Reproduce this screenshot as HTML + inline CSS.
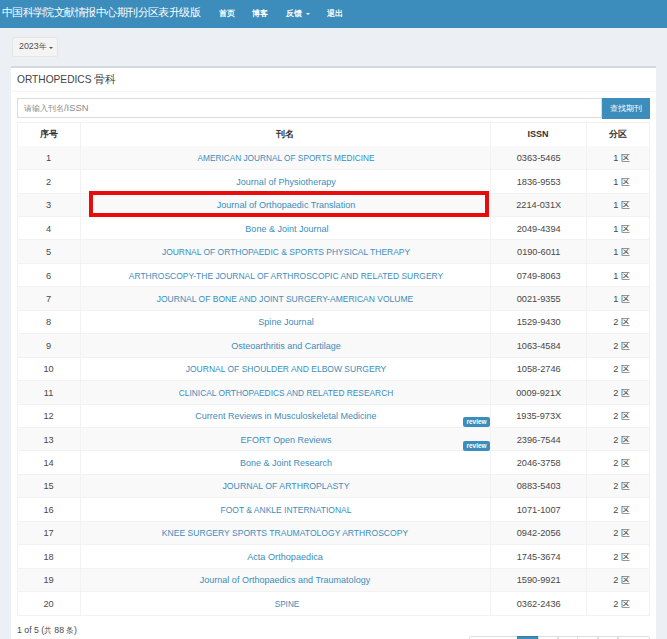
<!DOCTYPE html>
<html><head><meta charset="utf-8"><style>
*{margin:0;padding:0;box-sizing:border-box}
html,body{width:667px;height:639px;overflow:hidden;background:#ecf0f5;font-family:"Liberation Sans",sans-serif;color:#333;position:relative}
#nav{position:absolute;left:0;top:0;width:667px;height:27.6px;background:#3c8dbc}
#brand{position:absolute;left:1.7px;top:5.2px;font-size:11px;line-height:14px;letter-spacing:-0.55px;color:#fff;white-space:nowrap}
.nv{position:absolute;top:8.3px;font-weight:bold;font-size:8px;line-height:11px;color:#fff;white-space:nowrap}
.caret{position:absolute;width:0;height:0;border-left:2px solid transparent;border-right:2px solid transparent;border-top:2px solid #555}
#yearbtn{position:absolute;left:11.5px;top:36.6px;width:46.6px;height:20px;background:#f4f4f4;border:1px solid #e6e6e6;border-radius:2px}
#yeartxt{position:absolute;left:18.7px;top:40.3px;font-size:9.2px;line-height:12px;color:#505050;white-space:nowrap;transform:scaleX(0.965);transform-origin:0 50%}
#yeartxt span{font-size:8px}
#box{position:absolute;left:11.2px;top:66.2px;width:644.8px;height:600px;background:#fff;border-top:2px solid #d4d8df}
#boxtitle{position:absolute;left:16.5px;top:71.5px;font-size:11px;line-height:14px;color:#444;white-space:nowrap}
#boxtitle .lat{display:inline-block;transform:scaleX(0.925);transform-origin:0 50%;}
#boxtitle .cjk{position:absolute;left:77.3px;top:0}
#boxhr{position:absolute;left:11.2px;top:90.6px;width:644.8px;height:1px;background:#f4f4f4}
#search{position:absolute;left:16.7px;top:98.3px;width:585.5px;height:19.4px;border:1px solid #dcdcdc;background:#fff}
#ph{position:absolute;left:24px;top:102.4px;font-size:8px;line-height:11px;color:#8a8a8a;white-space:nowrap}
#ph span{font-size:9.4px}
#sbtn{position:absolute;left:602px;top:98.1px;width:48px;height:20.7px;background:#3c8dbc}
#sbtxt{position:absolute;left:609.8px;top:103px;font-size:8px;line-height:11px;color:#fff;white-space:nowrap}
#thead{position:absolute;left:17.2px;top:122.3px;width:632.8px;height:23.90px;background:#fff}
.th{position:absolute;top:123.40px;height:23.90px;line-height:23.90px;font-size:9px;font-weight:bold;text-align:center;color:#333;white-space:nowrap}
.row{position:absolute;left:17.2px;width:632.8px;height:23.44px}
.hl{position:absolute;left:17.2px;width:632.8px;height:1px;background:#f2f2f2}
.vl{position:absolute;top:122.3px;width:1px;height:492.70px;background:#f2f2f2}
.cell{position:absolute;height:23.44px;line-height:23.44px;font-size:9.2px;text-align:center;white-space:nowrap;color:#444}
.c1{left:17.2px;width:63.1px;color:#484848;font-size:9.8px;transform:scaleX(0.94)}
.nm{width:600px;color:#3c8dbc;font-size:9.6px}
.c3{left:490.5px;width:95.4px;color:#484848;font-size:9.8px;transform:scaleX(0.94)}
.c4{left:589.3px;width:64.4px;color:#484848;margin-top:1px}
.badge{position:absolute;left:463px;width:27px;height:10px;background:#3c8dbc;border-radius:2px;color:#fff;font-size:6.5px;font-weight:bold;line-height:10px;text-align:center}
#redbox{position:absolute;left:89px;top:191px;width:400px;height:26px;border:4px solid #e80b0b}
#foot{position:absolute;left:17.1px;top:623.8px;font-size:9.2px;line-height:12px;color:#4a4a4a;white-space:nowrap;transform:scaleX(0.953);transform-origin:0 50%}
#foot span{font-size:8px}
.pg{position:absolute;top:636.3px;height:20px;border:1px solid #ddd;background:#fff}
</style></head><body>
<div id="nav"></div>
<div id="brand">中国科学院文献情报中心期刊分区表升级版</div>
<div class="nv" style="left:218.6px">首页</div>
<div class="nv" style="left:252.2px">博客</div>
<div class="nv" style="left:285.5px">反馈</div>
<div class="caret" style="left:305.6px;top:12.6px;border-top-color:#fff"></div>
<div class="nv" style="left:326.5px">退出</div>
<div id="yearbtn"></div>
<div id="yeartxt">2023<span>年</span></div>
<div class="caret" style="left:49px;top:46.5px;border-top-color:#555"></div>
<div id="box"></div>
<div id="boxtitle"><span class="lat">ORTHOPEDICS</span><span class="cjk">骨科</span></div>
<div id="boxhr"></div>
<div id="search"></div>
<div id="ph">请输入刊名<span>/ISSN</span></div>
<div id="sbtn"></div>
<div id="sbtxt">查找期刊</div>
<div id="thead"></div>
<div class="row" style="top:146.20px;background:#f9f9f9"></div><div class="row" style="top:169.64px;background:#fff"></div><div class="row" style="top:193.08px;background:#f9f9f9"></div><div class="row" style="top:216.52px;background:#fff"></div><div class="row" style="top:239.96px;background:#f9f9f9"></div><div class="row" style="top:263.40px;background:#fff"></div><div class="row" style="top:286.84px;background:#f9f9f9"></div><div class="row" style="top:310.28px;background:#fff"></div><div class="row" style="top:333.72px;background:#f9f9f9"></div><div class="row" style="top:357.16px;background:#fff"></div><div class="row" style="top:380.60px;background:#f9f9f9"></div><div class="row" style="top:404.04px;background:#fff"></div><div class="row" style="top:427.48px;background:#f9f9f9"></div><div class="row" style="top:450.92px;background:#fff"></div><div class="row" style="top:474.36px;background:#f9f9f9"></div><div class="row" style="top:497.80px;background:#fff"></div><div class="row" style="top:521.24px;background:#f9f9f9"></div><div class="row" style="top:544.68px;background:#fff"></div><div class="row" style="top:568.12px;background:#f9f9f9"></div><div class="row" style="top:591.56px;background:#fff"></div><div class="cell c1" style="top:146.30px">1</div><div class="cell nm" style="top:146.30px;left:-14.40px;transform:scaleX(0.8626)">AMERICAN JOURNAL OF SPORTS MEDICINE</div><div class="cell c3" style="top:146.30px">0363-5465</div><div class="cell c4" style="top:146.30px">1 区</div><div class="cell c1" style="top:169.74px">2</div><div class="cell nm" style="top:169.74px;left:-14.05px;transform:scaleX(0.9421)">Journal of Physiotherapy</div><div class="cell c3" style="top:169.74px">1836-9553</div><div class="cell c4" style="top:169.74px">1 区</div><div class="cell c1" style="top:193.18px">3</div><div class="cell nm" style="top:193.18px;left:-13.80px;transform:scaleX(0.9444)">Journal of Orthopaedic Translation</div><div class="cell c3" style="top:193.18px">2214-031X</div><div class="cell c4" style="top:193.18px">1 区</div><div class="cell c1" style="top:216.62px">4</div><div class="cell nm" style="top:216.62px;left:-13.50px;transform:scaleX(0.9407)">Bone &amp; Joint Journal</div><div class="cell c3" style="top:216.62px">2049-4394</div><div class="cell c4" style="top:216.62px">1 区</div><div class="cell c1" style="top:240.06px">5</div><div class="cell nm" style="top:240.06px;left:-14.10px;transform:scaleX(0.8829)">JOURNAL OF ORTHOPAEDIC &amp; SPORTS PHYSICAL THERAPY</div><div class="cell c3" style="top:240.06px">0190-6011</div><div class="cell c4" style="top:240.06px">1 区</div><div class="cell c1" style="top:263.50px">6</div><div class="cell nm" style="top:263.50px;left:-14.25px;transform:scaleX(0.8822)">ARTHROSCOPY-THE JOURNAL OF ARTHROSCOPIC AND RELATED SURGERY</div><div class="cell c3" style="top:263.50px">0749-8063</div><div class="cell c4" style="top:263.50px">1 区</div><div class="cell c1" style="top:286.94px">7</div><div class="cell nm" style="top:286.94px;left:-14.55px;transform:scaleX(0.8878)">JOURNAL OF BONE AND JOINT SURGERY-AMERICAN VOLUME</div><div class="cell c3" style="top:286.94px">0021-9355</div><div class="cell c4" style="top:286.94px">1 区</div><div class="cell c1" style="top:310.38px">8</div><div class="cell nm" style="top:310.38px;left:-14.10px;transform:scaleX(0.9444)">Spine Journal</div><div class="cell c3" style="top:310.38px">1529-9430</div><div class="cell c4" style="top:310.38px">2 区</div><div class="cell c1" style="top:333.82px">9</div><div class="cell nm" style="top:333.82px;left:-14.45px;transform:scaleX(0.9391)">Osteoarthritis and Cartilage</div><div class="cell c3" style="top:333.82px">1063-4584</div><div class="cell c4" style="top:333.82px">2 区</div><div class="cell c1" style="top:357.26px">10</div><div class="cell nm" style="top:357.26px;left:-14.45px;transform:scaleX(0.8875)">JOURNAL OF SHOULDER AND ELBOW SURGERY</div><div class="cell c3" style="top:357.26px">1058-2746</div><div class="cell c4" style="top:357.26px">2 区</div><div class="cell c1" style="top:380.70px">11</div><div class="cell nm" style="top:380.70px;left:-14.35px;transform:scaleX(0.8721)">CLINICAL ORTHOPAEDICS AND RELATED RESEARCH</div><div class="cell c3" style="top:380.70px">0009-921X</div><div class="cell c4" style="top:380.70px">2 区</div><div class="cell c1" style="top:404.14px">12</div><div class="cell nm" style="top:404.14px;left:-14.25px;transform:scaleX(0.9392)">Current Reviews in Musculoskeletal Medicine</div><div class="cell c3" style="top:404.14px">1935-973X</div><div class="cell c4" style="top:404.14px">2 区</div><div class="cell c1" style="top:427.58px">13</div><div class="cell nm" style="top:427.58px;left:-14.10px;transform:scaleX(0.9335)">EFORT Open Reviews</div><div class="cell c3" style="top:427.58px">2396-7544</div><div class="cell c4" style="top:427.58px">2 区</div><div class="cell c1" style="top:451.02px">14</div><div class="cell nm" style="top:451.02px;left:-14.10px;transform:scaleX(0.9383)">Bone &amp; Joint Research</div><div class="cell c3" style="top:451.02px">2046-3758</div><div class="cell c4" style="top:451.02px">2 区</div><div class="cell c1" style="top:474.46px">15</div><div class="cell nm" style="top:474.46px;left:-14.15px;transform:scaleX(0.9096)">JOURNAL OF ARTHROPLASTY</div><div class="cell c3" style="top:474.46px">0883-5403</div><div class="cell c4" style="top:474.46px">2 区</div><div class="cell c1" style="top:497.90px">16</div><div class="cell nm" style="top:497.90px;left:-14.40px;transform:scaleX(0.8864)">FOOT &amp; ANKLE INTERNATIONAL</div><div class="cell c3" style="top:497.90px">1071-1007</div><div class="cell c4" style="top:497.90px">2 区</div><div class="cell c1" style="top:521.34px">17</div><div class="cell nm" style="top:521.34px;left:-14.55px;transform:scaleX(0.8929)">KNEE SURGERY SPORTS TRAUMATOLOGY ARTHROSCOPY</div><div class="cell c3" style="top:521.34px">0942-2056</div><div class="cell c4" style="top:521.34px">2 区</div><div class="cell c1" style="top:544.78px">18</div><div class="cell nm" style="top:544.78px;left:-14.55px;transform:scaleX(0.9523)">Acta Orthopaedica</div><div class="cell c3" style="top:544.78px">1745-3674</div><div class="cell c4" style="top:544.78px">2 区</div><div class="cell c1" style="top:568.22px">19</div><div class="cell nm" style="top:568.22px;left:-14.55px;transform:scaleX(0.9396)">Journal of Orthopaedics and Traumatology</div><div class="cell c3" style="top:568.22px">1590-9921</div><div class="cell c4" style="top:568.22px">2 区</div><div class="cell c1" style="top:591.66px">20</div><div class="cell nm" style="top:591.66px;left:-13.45px;transform:scaleX(0.8555)">SPINE</div><div class="cell c3" style="top:591.66px">0362-2436</div><div class="cell c4" style="top:591.66px">2 区</div>
<div class="hl" style="top:169.14px"></div><div class="hl" style="top:192.58px"></div><div class="hl" style="top:216.02px"></div><div class="hl" style="top:239.46px"></div><div class="hl" style="top:262.90px"></div><div class="hl" style="top:286.34px"></div><div class="hl" style="top:309.78px"></div><div class="hl" style="top:333.22px"></div><div class="hl" style="top:356.66px"></div><div class="hl" style="top:380.10px"></div><div class="hl" style="top:403.54px"></div><div class="hl" style="top:426.98px"></div><div class="hl" style="top:450.42px"></div><div class="hl" style="top:473.86px"></div><div class="hl" style="top:497.30px"></div><div class="hl" style="top:520.74px"></div><div class="hl" style="top:544.18px"></div><div class="hl" style="top:567.62px"></div><div class="hl" style="top:591.06px"></div><div class="hl" style="top:614.50px"></div>
<div class="hl" style="top:122.30px"></div>
<div class="vl" style="left:17.2px"></div>
<div class="vl" style="left:80.3px"></div>
<div class="vl" style="left:490.2px"></div>
<div class="vl" style="left:585.6px"></div>
<div class="vl" style="left:649.0px"></div>
<div class="th" style="left:17.2px;width:63.1px">序号</div>
<div class="th" style="left:80.3px;width:409.9px">刊名</div>
<div class="th" style="left:490.2px;width:95.4px">ISSN</div>
<div class="th" style="left:585.6px;width:64.4px">分区</div>
<div class="badge" style="top:417.4px">review</div>
<div class="badge" style="top:441px">review</div>
<div id="redbox"></div>
<div id="foot">1 of 5 (<span>共</span> 88 <span>条</span>)</div>
<div class="pg" style="left:469px;width:48.5px;border-radius:2px 0 0 0"></div>
<div class="pg" style="left:516.8px;width:21px;background:#3c8dbc;border-color:#367fa9"></div>
<div class="pg" style="left:537.6px;width:20.6px"></div>
<div class="pg" style="left:557.8px;width:20px"></div>
<div class="pg" style="left:577.4px;width:20.6px"></div>
<div class="pg" style="left:597.6px;width:20.3px"></div>
<div class="pg" style="left:617.5px;width:32px;border-radius:0 2px 0 0"></div>
</body></html>
